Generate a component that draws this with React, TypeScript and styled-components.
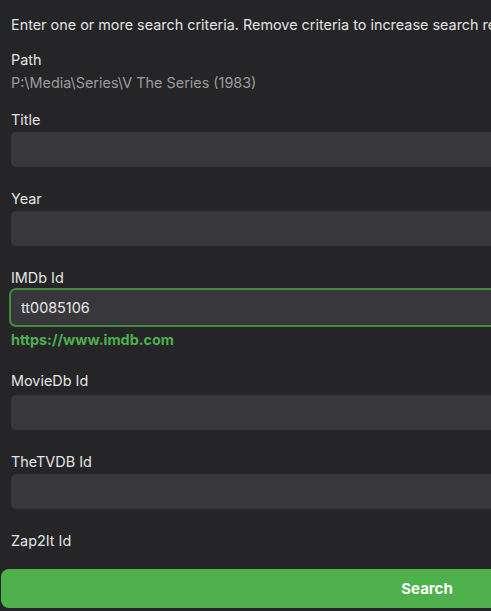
import styled, { createGlobalStyle } from "styled-components";

const GlobalStyle = createGlobalStyle`
  html, body {
    margin: 0;
    padding: 0;
    overflow: hidden;
    background: #252528;
  }
  * {
    box-sizing: border-box;
  }
`;

const Dialog = styled.div`
  width: 854px;
  height: 611px;
  display: flex;
  flex-direction: column;
  background: #252528;
  color: #e6e6e6;
  font-family: Inter, "Noto Sans", sans-serif;
  font-size: 14.4px;
`;

const Content = styled.div`
  flex: 1;
  overflow: hidden;
  padding: 16px 11px 0 11px;
`;

const Intro = styled.p`
  margin: 0 0 18px;
  line-height: 17px;
  color: #e2e2e2;
  white-space: nowrap;
`;

const Field = styled.div<{ $space?: number }>`
  margin-bottom: ${(p) => p.$space ?? 23}px;
`;

const Label = styled.div<{ $gap?: number }>`
  line-height: 17px;
  margin-bottom: ${(p) => p.$gap ?? 4}px;
  color: #e4e4e4;
`;

const ReadOnly = styled.div`
  line-height: 17px;
  color: #9c9c9c;
`;

const Input = styled.input<{ $focused?: boolean }>`
  display: block;
  width: 100%;
  height: 35px;
  border: none;
  border-radius: 5px;
  background: #38383c;
  color: #e8e8e8;
  font: inherit;
  padding: 0 10px;
  outline: none;
  box-shadow: ${(p) => (p.$focused ? "0 0 0 2px #3f8f3c" : "none")};
`;

const Link = styled.div`
  margin-top: 6px;
  line-height: 17px;
  font-weight: 700;
  color: #4caf50;
`;

const Footer = styled.div`
  padding: 16px 1px 3px 1px;
  background: #252528;
`;

const Button = styled.button`
  display: block;
  width: 100%;
  height: 39px;
  border: none;
  border-radius: 8px;
  background: #4fb14b;
  color: #fff;
  font-family: inherit;
  font-size: 15px;
  font-weight: 700;
`;

const fields = ["Title", "Year"];

export default function App() {
  return (
    <>
      <GlobalStyle />
      <Dialog>
        <Content>
          <Intro>
            Enter one or more search criteria. Remove criteria to increase search results.
          </Intro>
          <Field $space={20}>
            <Label $gap={6}>Path</Label>
            <ReadOnly>P:\Media\Series\V The Series (1983)</ReadOnly>
          </Field>
          {fields.map((f) => (
            <Field key={f}>
              <Label>{f}</Label>
              <Input />
            </Field>
          ))}
          <Field $space={24}>
            <Label>IMDb Id</Label>
            <Input $focused defaultValue="tt0085106" />
            <Link>https://www.imdb.com</Link>
          </Field>
          <Field>
            <Label $gap={6}>MovieDb Id</Label>
            <Input />
          </Field>
          <Field>
            <Label>TheTVDB Id</Label>
            <Input />
          </Field>
          <Field>
            <Label>Zap2It Id</Label>
            <Input />
          </Field>
        </Content>
        <Footer>
          <Button>Search</Button>
        </Footer>
      </Dialog>
    </>
  );
}
